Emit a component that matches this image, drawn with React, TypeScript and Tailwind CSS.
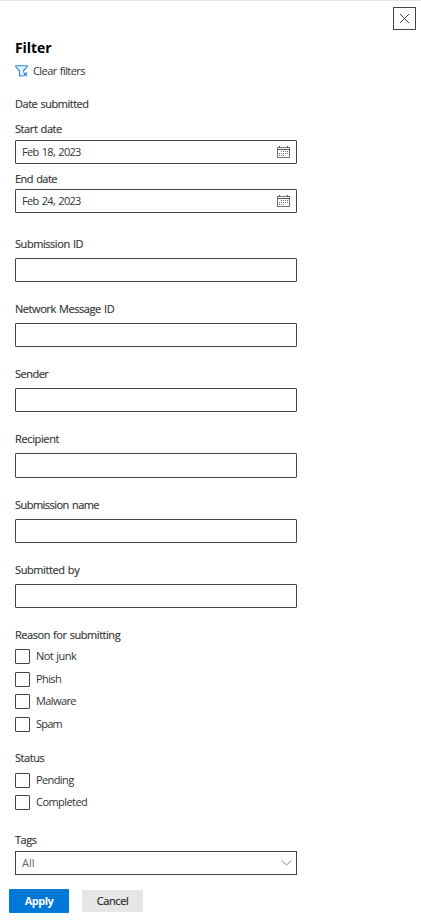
import React from "react";

function Label({ text, className }: { text: string; className: string }) {
  return (
    <div
      className={`h-4 whitespace-nowrap text-[11px] leading-4 font-medium text-[#333] [-webkit-text-stroke:0.15px_#333] ${className}`}
    >
      <span>{text}</span>
    </div>
  );
}

function CalendarIcon() {
  return (
    <svg width="13" height="12" viewBox="0 0 13 12" fill="none" shapeRendering="crispEdges">
      <path d="M0.5 1.5h12v9.5h-12z" stroke="#777" />
      <path d="M0 3.5h13" stroke="#555" />
      <path d="M2.5 0v2M10.5 0v2" stroke="#555" />
      <path d="M4 5.5h7M2 7.5h9M2 9.5h6" stroke="#777" strokeDasharray="1 1" />
    </svg>
  );
}

function DateField({ value, className }: { value: string; className: string }) {
  return (
    <div
      className={`flex h-6 items-center justify-between rounded-[1px] border border-[#444] pr-[6px] pl-[6px] text-[11px] leading-4 text-[#333] ${className}`}
    >
      <span className="tracking-[-0.68px] [word-spacing:1px]">{value}</span>
      <CalendarIcon />
    </div>
  );
}

function Box({ className }: { className: string }) {
  return <div className={`rounded-[1px] border border-[#444] ${className}`} />;
}

function Check({ text, className, tracking }: { text: string; className: string; tracking: string }) {
  return (
    <div className={`flex h-[15px] items-center gap-[6px] ${className}`}>
      <span className="h-[15px] w-[15px] shrink-0 rounded-[1px] border border-[#444]" />
      <span className={`pb-[2px] text-[11px] leading-[15px] whitespace-nowrap text-[#333] ${tracking}`}>{text}</span>
    </div>
  );
}

export default function App() {
  return (
    <div className="h-[924px] w-[421px] overflow-hidden border-t border-[#e6e6e6] bg-white font-['Open_Sans','Noto_Sans',sans-serif] [word-spacing:0.8px]">
      <div className="flex justify-end pt-[6px] pr-[5px]">
        <button className="flex h-[23px] w-[23px] items-center justify-center border border-[#444]" aria-label="Close">
          <svg width="11" height="11" viewBox="0 0 11 11" fill="none" stroke="#444" strokeWidth="1">
            <path d="M1 1l9 9M10 1l-9 9" />
          </svg>
        </button>
      </div>
      <div className="ml-[15px] w-[282px]">
        <h1 className="mt-2 h-5 text-[14px] leading-5 font-bold tracking-[-0.08px] text-black">Filter</h1>
        <div className="mt-[5px] flex h-4 items-center gap-[5px]">
          <svg width="13" height="12" viewBox="0 0 13 12" fill="none" stroke="#2b88d8" strokeWidth="1.1">
            <path d="M8 11H4.5V6L.8 1.8V.7h11.4v1.1L8.5 5.8v1" fill="#e3f1fb" />
            <path d="M8.5 7.5l3.5 3.5M12 7.5L8.5 11" strokeWidth="1.3" />
          </svg>
          <span className="text-[11px] leading-4 tracking-[-0.56px] whitespace-nowrap text-[#333]">Clear filters</span>
        </div>

        <Label text="Date submitted" className="mt-[17px] tracking-[-0.48px]" />
        <Label text="Start date" className="mt-[9px] tracking-[-0.42px]" />
        <DateField value="Feb 18, 2023" className="mt-[3px]" />
        <Label text="End date" className="mt-[7px] tracking-[-0.53px]" />
        <DateField value="Feb 24, 2023" className="mt-[2px]" />

        <Label text="Submission ID" className="mt-[23px] tracking-[-0.44px]" />
        <Box className="mt-[6px] h-6" />
        <Label text="Network Message ID" className="mt-[19px] tracking-[-0.43px]" />
        <Box className="mt-[6px] h-6" />
        <Label text="Sender" className="mt-[19px] tracking-[-0.5px]" />
        <Box className="mt-[6px] h-6" />
        <Label text="Recipient" className="mt-[19px] tracking-[-0.36px]" />
        <Box className="mt-[6px] h-[25px]" />
        <Label text="Submission name" className="mt-[19px] tracking-[-0.53px]" />
        <Box className="mt-[6px] h-6" />
        <Label text="Submitted by" className="mt-[19px] tracking-[-0.4px]" />
        <Box className="mt-[6px] h-6" />

        <Label text="Reason for submitting" className="mt-[19px] tracking-[-0.46px]" />
        <Check text="Not junk" className="mt-[6px]" tracking="tracking-[-0.55px]" />
        <Check text="Phish" className="mt-2" tracking="tracking-[-0.6px]" />
        <Check text="Malware" className="mt-[7px]" tracking="tracking-[-0.6px]" />
        <Check text="Spam" className="mt-2" tracking="tracking-[-0.75px]" />

        <Label text="Status" className="mt-[18px] tracking-[-0.45px]" />
        <Check text="Pending" className="mt-[7px]" tracking="tracking-[-0.6px]" />
        <Check text="Completed" className="mt-[7px]" tracking="tracking-[-0.55px]" />

        <Label text="Tags" className="mt-[22px] tracking-[-0.5px]" />
        <div className="mt-[3px] flex h-6 items-center justify-between border border-[#444] pr-1 pl-[6px] text-[11px] leading-4 text-[#666]">
          <span>All</span>
          <svg width="11" height="6" viewBox="0 0 11 6" fill="none" stroke="#888">
            <path d="M.7.5l4.8 4.6L10.3.5" />
          </svg>
        </div>
      </div>
      <div className="mt-[14px] ml-[9px] flex h-6 items-center gap-[13px] text-[11px] leading-4">
        <button className="h-6 w-[60px] rounded-[1px] bg-[#0078d7] font-bold tracking-[-0.5px] text-white">Apply</button>
        <button className="h-[22px] w-[61px] bg-[#e6e6e6] font-medium tracking-[-0.4px] text-[#222] [-webkit-text-stroke:0.15px_#222]">
          Cancel
        </button>
      </div>
    </div>
  );
}
